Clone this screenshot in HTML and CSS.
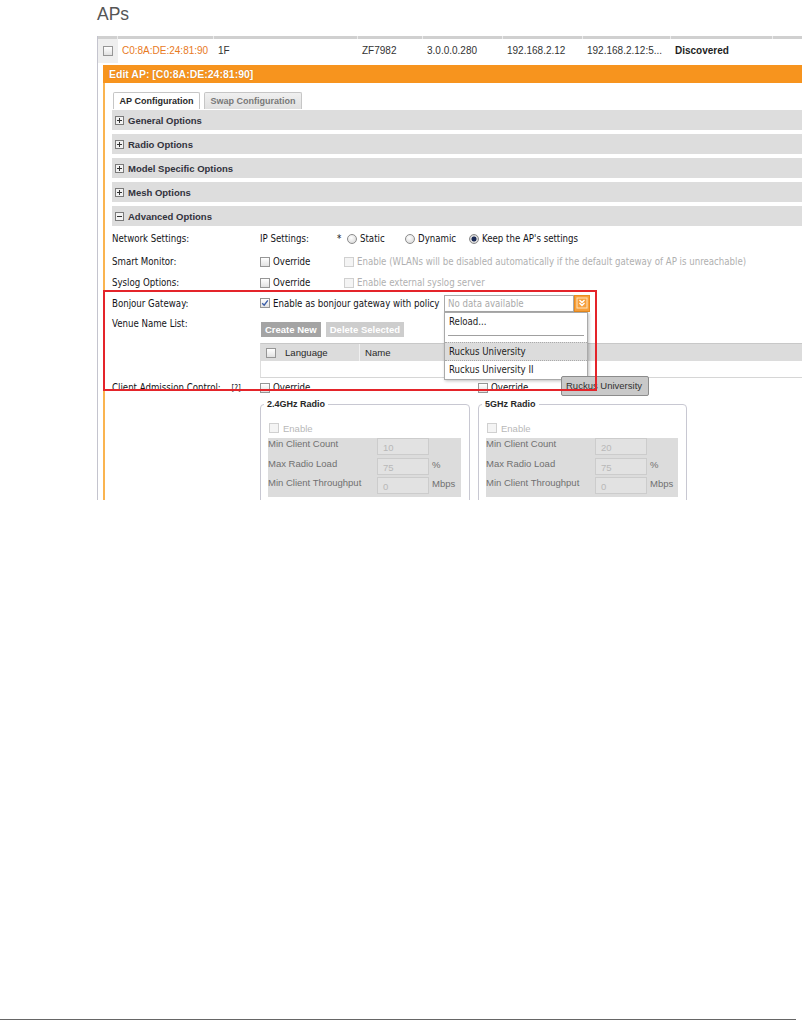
FILE: index.html
```html
<html>
<head>
<title>APs - Edit AP</title>
<link rel="stylesheet" href="styles.css">
</head>
<body>

<div class='shot'>
  <h1 class='title'>APs</h1>

  <div class='grid'>
    <div class='grid-head'>
      <span class='c-chk'></span><span class='c-mac'></span><span class='c-loc'></span><span class='c-model'></span><span class='c-fw'></span><span class='c-ip'></span><span class='c-ext'></span><span class='c-status'></span>
    </div>
    <div class='ap-row'>
      <span class='c-chk'><i class='box'></i></span>
      <span class='c-mac'>C0:8A:DE:24:81:90</span>
      <span class='c-loc'>1F</span>
      <span class='c-model'>ZF7982</span>
      <span class='c-fw'>3.0.0.0.280</span>
      <span class='c-ip'>192.168.2.12</span>
      <span class='c-ext'>192.168.2.12:5...</span>
      <span class='c-status'>Discovered</span>
    </div>

    <div class='edit'>
      <div class='edit-head'>Edit AP: [C0:8A:DE:24:81:90]</div>
      <div class='edit-body'>
        <div class='tabs'>
          <span class='tab active'>AP Configuration</span>
          <span class='tab'>Swap Configuration</span>
        </div>

        <div class='section'>
          <svg class='toggle' width='9' height='9' viewBox='0 0 9 9'><rect x='0.5' y='0.5' width='8' height='8' fill='#f2f2f2' stroke='#7a7a7a'/><path d='M2 4.5H7M4.5 2V7' stroke='#333' stroke-width='1'/></svg>
          <span>General Options</span>
        </div>
        <div class='section'>
          <svg class='toggle' width='9' height='9' viewBox='0 0 9 9'><rect x='0.5' y='0.5' width='8' height='8' fill='#f2f2f2' stroke='#7a7a7a'/><path d='M2 4.5H7M4.5 2V7' stroke='#333' stroke-width='1'/></svg>
          <span>Radio Options</span>
        </div>
        <div class='section'>
          <svg class='toggle' width='9' height='9' viewBox='0 0 9 9'><rect x='0.5' y='0.5' width='8' height='8' fill='#f2f2f2' stroke='#7a7a7a'/><path d='M2 4.5H7M4.5 2V7' stroke='#333' stroke-width='1'/></svg>
          <span>Model Specific Options</span>
        </div>
        <div class='section'>
          <svg class='toggle' width='9' height='9' viewBox='0 0 9 9'><rect x='0.5' y='0.5' width='8' height='8' fill='#f2f2f2' stroke='#7a7a7a'/><path d='M2 4.5H7M4.5 2V7' stroke='#333' stroke-width='1'/></svg>
          <span>Mesh Options</span>
        </div>
        <div class='section open'>
          <svg class='toggle' width='9' height='9' viewBox='0 0 9 9'><rect x='0.5' y='0.5' width='8' height='8' fill='#f2f2f2' stroke='#7a7a7a'/><path d='M2 4.5H7' stroke='#333' stroke-width='1'/></svg>
          <span>Advanced Options</span>
        </div>

        <div class='form'>
          <div class='row r-net'>
            <label>Network Settings:</label>
            <div class='field'>
              <span class='w-ip'>IP Settings:</span>
              <span class='w-star'>*</span>
              <span class='w-static'><i class='radio'></i>Static</span>
              <span class='w-dyn'><i class='radio'></i>Dynamic</span>
              <span><i class='radio on'></i>Keep the AP's settings</span>
            </div>
          </div>

          <div class='row r-smart'>
            <label>Smart Monitor:</label>
            <div class='field'>
              <span class='w-over'><i class='box'></i>Override</span>
              <span class='off'><i class='box dis'></i>Enable (WLANs will be disabled automatically if the default gateway of AP is unreachable)</span>
            </div>
          </div>

          <div class='row r-sys'>
            <label>Syslog Options:</label>
            <div class='field'>
              <span class='w-over'><i class='box'></i>Override</span>
              <span class='off'><i class='box dis'></i>Enable external syslog server</span>
            </div>
          </div>

          <div class='row r-bonjour'>
            <label>Bonjour Gateway:</label>
            <div class='field'>
              <i class='box'><svg width='8' height='8' viewBox='0 0 8 8'><path d='M1.2 4.2L3.2 6.2L6.8 1.4' fill='none' stroke='#3b5ea8' stroke-width='1.4'/></svg></i>
              <span class='w-policy'>Enable as bonjour gateway with policy</span>
              <div class='combo'>
                <span class='combo-input'>No data available</span>
                <span class='combo-btn'>
                  <svg width='12' height='12' viewBox='0 0 12 12'><rect x='1' y='1' width='10' height='10' fill='none' stroke='#fde3bd' stroke-width='1'/><path d='M3.5 3L6 5.5L8.5 3M3.5 6L6 8.5L8.5 6' fill='none' stroke='#fff' stroke-width='1.3'/></svg>
                </span>
                <div class='menu'>
                  <div class='menu-item'>Reload...</div>
                  <div class='menu-sep'></div>
                  <div class='menu-item sel'>Ruckus University</div>
                  <div class='menu-item'>Ruckus University II</div>
                </div>
              </div>
            </div>
          </div>

          <div class='row r-venue'>
            <label>Venue Name List:</label>
            <div class='field'>
              <div class='buttons'>
                <span class='btn'>Create New</span>
                <span class='btn light'>Delete Selected</span>
              </div>
              <div class='table'>
                <div class='th'>
                  <span class='th-chk'><i class='box'></i></span>
                  <span class='th-lang'>Language</span>
                  <span class='th-name'>Name</span>
                </div>
                <div class='tr'></div>
              </div>
            </div>
          </div>

          <div class='row r-client'>
            <label>Client Admission Control: <small>[?]</small></label>
            <div class='field'>
              <span class='w-client'><i class='box'></i>Override</span>
              <span><i class='box'></i>Override</span>
            </div>
          </div>

          <div class='row r-radios'>
            <label></label>
            <div class='field'>
              <fieldset class='radio-set'>
                <legend>2.4GHz Radio</legend>
                <div class='enable'><i class='box dis'></i>Enable</div>
                <div class='limits'>
                  <span>Min Client Count</span><span class='num'>10</span><span></span>
                  <span>Max Radio Load</span><span class='num'>75</span><span class='unit'>%</span>
                  <span>Min Client Throughput</span><span class='num'>0</span><span class='unit'>Mbps</span>
                </div>
              </fieldset>
              <fieldset class='radio-set'>
                <legend>5GHz Radio</legend>
                <div class='enable'><i class='box dis'></i>Enable</div>
                <div class='limits'>
                  <span>Min Client Count</span><span class='num'>20</span><span></span>
                  <span>Max Radio Load</span><span class='num'>75</span><span class='unit'>%</span>
                  <span>Min Client Throughput</span><span class='num'>0</span><span class='unit'>Mbps</span>
                </div>
              </fieldset>
            </div>
          </div>
        </div>
      </div>
    </div>
  </div>

  <div class='callout'></div>
  <div class='tooltip'>Ruckus University</div>
</div>

<div class='rule'></div>

</body>
</html>
```

FILE: styles.css
```css
body{
  margin:0px;
  font-family:"Liberation Sans", Arial, sans-serif;
  color:rgb(51,51,51);
  background:white;
}

.shot{
  position:relative;
  width:802px;
  height:500px;
  overflow:hidden;
}

.title{
  margin:0px 0px 0px 97px;
  padding-top:4px;
  height:32px;

  font-size:17.5px;
  line-height:20px;
  font-weight:400;
  color:rgb(85,85,85);
}

.grid{
  margin-left:97px;
  height:470px;
  border-left:1px solid rgb(196,196,206);
}

.grid-head{
  display:flex;
  height:3px;
  background:rgb(208,208,208);
}
.grid-head span{
  box-sizing:border-box;
  border-right:1px solid rgb(236,236,236);
}

.ap-row{
  display:flex;
  height:24px;

  font-size:10px;
  line-height:24px;
  white-space:nowrap;
}
.ap-row span{
  box-sizing:border-box;
  padding-left:4px;
}
.ap-row .c-chk{
  display:flex;
  align-items:center;
  justify-content:center;
  padding:0px;

  background:rgb(239,239,239);
}

.c-chk{ width:20px; flex:none; }
.c-mac{ width:96px; flex:none; color:rgb(232,122,30); }
.c-loc{ width:144px; flex:none; }
.c-model{ width:65px; flex:none; }
.c-fw{ width:80px; flex:none; }
.c-ip{ width:80px; flex:none; }
.c-ext{ width:88px; flex:none; }
.c-status{ width:102px; flex:none; font-weight:700; color:rgb(30,30,30); }

.box{
  display:inline-block;
  vertical-align:middle;
  width:10px;
  height:10px;
  box-sizing:border-box;

  border:1px solid rgb(150,150,150);
  background:linear-gradient(rgb(255,255,255), rgb(226,226,226));

  position:relative;
}
.box svg{
  position:absolute;
  top:0px;
  left:0px;
}
.box.dis{
  border-color:rgb(208,208,208);
  background:rgb(244,244,244);
}

.radio{
  display:inline-block;
  vertical-align:middle;
  width:10px;
  height:10px;
  box-sizing:border-box;
  margin-right:3px;

  border-radius:50%;
  border:1px solid rgb(140,140,140);
  background:radial-gradient(circle at 40% 35%, rgb(255,255,255), rgb(210,210,210));
}
.radio.on{
  background:radial-gradient(circle, rgb(28,44,88) 0px, rgb(28,44,88) 2.2px, rgb(215,215,215) 2.8px);
}

.edit{
  margin:2px 0px 0px 5px;
}
.edit-head{
  height:18px;
  padding-left:6px;

  background:rgb(247,148,30);

  font-size:10.5px;
  font-weight:700;
  line-height:18px;
  color:white;
  text-shadow:0px 0px 1px rgba(150,70,0,0.5);
}
.edit-body{
  padding:9px 0px 0px 7px;
  height:420px;
  border-left:2px solid rgb(250,180,80);
}

.tabs{
  display:flex;
  height:17px;
  margin-bottom:1px;
}
.tab{
  box-sizing:border-box;
  width:98px;
  height:17px;
  margin-left:4px;

  border:1px solid rgb(198,198,198);
  border-bottom:0px;
  border-radius:2px 2px 0px 0px;
  background:linear-gradient(rgb(240,240,240), rgb(224,224,224));

  font-size:9px;
  font-weight:700;
  line-height:16px;
  text-align:center;
  color:rgb(120,120,120);
}
.tab.active{
  width:87px;
  margin-left:1px;

  background:white;
  color:rgb(40,40,40);
}

.section{
  display:flex;
  align-items:center;
  height:20px;
  margin-bottom:4px;
  padding-left:3px;

  background:rgb(221,221,221);

  font-size:9.5px;
  font-weight:700;
  color:rgb(50,50,60);
}
.section.open{
  margin-bottom:0px;
}
.section .toggle{
  margin-right:4px;
}

.form{
  font-family:"DejaVu Sans Condensed", "DejaVu Sans", sans-serif;
  font-stretch:condensed;
  font-size:9.6px;
  color:rgb(20,20,24);
}
.form .row{
  display:grid;
  grid-template-columns:148px 1fr;
  align-items:center;
}
.form label small{
  font-size:8px;
  padding-left:8px;
}
.field{
  display:flex;
  align-items:center;
  white-space:nowrap;
}
.field .box{
  margin-right:3px;
}

.r-net{ height:25px; }
.r-smart{ height:21px; }
.r-sys{ height:20px; }
.r-bonjour{ height:22px; }
.r-client{ height:19px; }

.w-ip{ width:77px; }
.w-star{ width:10px; }
.w-static{ width:58px; }
.w-dyn{ width:64px; }
.w-over{ width:84px; }
.w-client{ width:218px; }
.w-policy{ width:171px; }

.off{
  color:rgb(176,176,176);
}

.combo{
  position:relative;
  display:flex;
  height:17px;
}
.combo-input{
  box-sizing:border-box;
  width:130px;
  height:17px;
  padding-left:3px;

  border:1px solid rgb(170,170,170);
  background:white;

  line-height:15px;
  color:rgb(170,170,170);
}
.combo-btn{
  box-sizing:border-box;
  width:16px;
  height:17px;

  display:flex;
  align-items:center;
  justify-content:center;

  background:rgb(247,160,60);
  border:1px solid rgb(235,140,30);
}

.menu{
  position:absolute;
  top:17px;
  left:0px;
  width:144px;
  z-index:2;
  box-sizing:border-box;
  padding-bottom:1px;

  border:1px solid rgb(170,170,170);
  background:white;
  box-shadow:1px 1px 3px rgba(0,0,0,0.25);
}
.menu-item{
  height:17px;
  padding-left:4px;

  line-height:17px;
  color:rgb(30,30,30);
}
.menu-item.sel{
  background:rgb(220,220,220);
  border-top:1px dotted rgb(170,170,170);
  border-bottom:1px dotted rgb(170,170,170);
}
.menu-sep{
  height:12px;
  margin:0px 3px 0px 3px;
  background:linear-gradient(rgb(160,160,160), rgb(160,160,160)) 0px 5px / 100% 1px no-repeat;
}

.r-venue{
  align-items:start !important;
}
.r-venue label{
  padding-top:4px;
  line-height:11px;
}
.r-venue .field{
  display:block;
  padding-top:8px;
}
.buttons{
  display:flex;
  padding-left:1px;
}
.btn{
  box-sizing:border-box;
  height:15px;
  padding:0px 4px;
  margin-right:5px;

  background:rgb(164,164,164);

  font-family:"Liberation Sans", Arial, sans-serif;
  font-stretch:normal;
  font-size:9.5px;
  font-weight:700;
  line-height:15px;
  color:white;
}
.btn.light{
  background:rgb(205,205,205);
}

.table{
  margin-top:6px;
  font-family:"Liberation Sans", Arial, sans-serif;
  font-stretch:normal;
}
.th{
  display:flex;
  align-items:center;
  height:17px;

  border-top:1px solid rgb(200,200,200);
  border-left:1px solid rgb(220,220,220);
  background:rgb(220,220,220);

  color:rgb(40,40,40);
}
.th span{
  box-sizing:border-box;
  display:flex;
  align-items:center;
  height:17px;
}
.th-chk{
  width:24px;
  padding-left:5px;
}
.th-lang{
  width:75px;
  border-right:1px solid rgb(240,240,240);
}
.th-name{
  padding-left:5px;
}
.tr{
  height:16px;
  border-left:1px solid rgb(222,222,222);
  border-bottom:1px solid rgb(214,214,214);
}

.r-radios .field{
  align-items:flex-start;
  gap:8px;
  padding-top:2px;
}
.radio-set{
  box-sizing:border-box;
  width:210px;
  height:130px;
  margin:0px;
  padding:0px 8px 0px 7px;

  border:1px solid rgb(200,200,210);
  border-radius:4px;

  font-family:"Liberation Sans", Arial, sans-serif;
  font-stretch:normal;
  font-size:9.5px;
  color:rgb(112,112,112);
}
.radio-set + .radio-set{
  width:209px;
}
.radio-set legend{
  margin-left:-4px;
  padding:0px 3px;

  font-size:9px;
  font-weight:700;
  line-height:11px;
  color:rgb(40,40,40);
}
.enable{
  height:14px;
  margin-top:12px;

  line-height:14px;
  color:rgb(184,184,184);
}
.enable .box{
  margin:-2px 4px 0px 1px;
}
.limits{
  display:grid;
  grid-template-columns:109px 52px auto;
  grid-auto-rows:19.5px;
  margin-top:2px;

  background:rgb(220,220,220);
}
.limits span{
  line-height:12px;
}
.limits .num{
  box-sizing:border-box;
  height:17px;
  padding-left:5px;

  border:1px solid rgb(204,204,204);
  background:rgb(226,226,226);

  line-height:17px;
  color:rgb(184,184,184);
}
.limits .unit{
  padding-left:3px;
  line-height:14px;
}

.callout{
  position:absolute;
  top:290px;
  left:103px;
  width:494px;
  height:101px;
  box-sizing:border-box;
  z-index:3;

  border:2px solid rgb(228,36,42);
}

.tooltip{
  position:absolute;
  top:376px;
  left:561px;
  width:88px;
  height:20px;
  box-sizing:border-box;
  padding-left:4px;
  z-index:2;

  border:1px solid rgb(140,140,140);
  border-radius:2px;
  background:rgb(201,201,201);

  font-size:9.5px;
  line-height:18px;
  color:rgb(50,50,50);
}

.rule{
  width:796px;
  height:1px;
  margin-top:519px;

  background:rgb(102,102,102);
}
```
